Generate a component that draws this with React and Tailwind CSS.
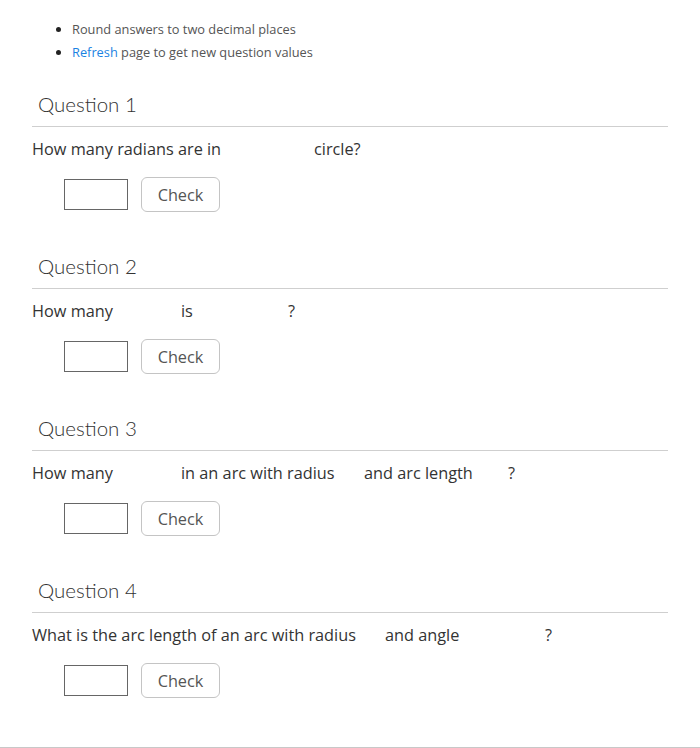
import React from "react";

const questions = [
  { n: 1, parts: [["How many radians are in", "w-[282px]"], ["circle?", ""]] },
  { n: 2, parts: [["How many", "w-[149px]"], ["is", "w-[107px]"], ["?", ""]] },
  { n: 3, parts: [["How many", "w-[149px]"], ["in an arc with radius", "w-[183px]"], ["and arc length", "w-[144px]"], ["?", ""]] },
  { n: 4, parts: [["What is the arc length of an arc with radius", "w-[353px]"], ["and angle", "w-[160px]"], ["?", ""]] },
];

function Question({ q }) {
  return (
    <div className="pt-[13px]">
      <h2 className="pl-[6px] pb-[9px] text-[20.5px] leading-[26px] font-light text-[#333] border-b border-[#cfcfcf] [font-family:Lato,sans-serif]">
        Question {q.n}
      </h2>
      <p className="mt-[10px] flex text-[16.3px] leading-[24px] text-[#333] whitespace-nowrap">
        {q.parts.map(([t, w], i) => (
          <span key={i} className={"shrink-0 " + w}>{t}</span>
        ))}
      </p>
      <div className="mt-[16px] ml-[32px] flex items-center gap-[13px] pb-[28px]">
        <input className="w-[64px] h-[31px] border border-[#666] bg-white outline-none" />
        <button className="w-[79px] h-[35px] pt-[2px] border border-[#c4c4c4] rounded-[6px] bg-white text-[16.3px] text-[#555]">
          Check
        </button>
      </div>
    </div>
  );
}

export default function App() {
  return (
    <div className="w-[700px] h-[748px] bg-white [font-family:'Open_Sans',sans-serif] border-b border-[#c8c8c8] box-border">
      <div className="px-[32px]">
        <ul className="pt-[18px] pl-[40px] list-disc text-[12.8px] leading-[23px] text-[#555] marker:text-[#222]">
          <li>Round answers to two decimal places</li>
          <li>
            <span className="text-[#1a82e2]">Refresh</span> page to get new question values
          </li>
        </ul>
        <div className="mt-[14px]">
          {questions.map((q) => (
            <Question key={q.n} q={q} />
          ))}
        </div>
      </div>
    </div>
  );
}
